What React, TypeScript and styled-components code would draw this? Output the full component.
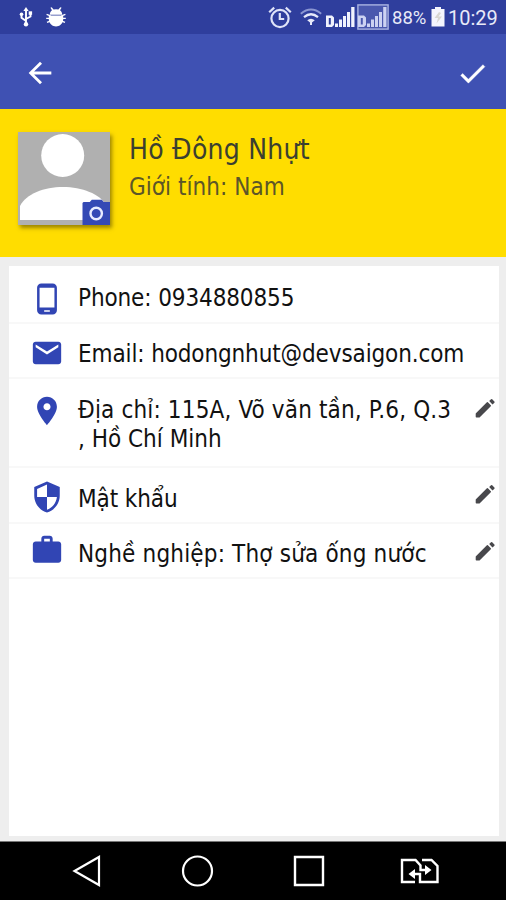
import React from 'react';
import styled, { createGlobalStyle } from 'styled-components';

const GlobalStyle = createGlobalStyle`
  html, body { margin: 0; padding: 0; }
  body { background: #eee; overflow: hidden; }
  svg { display: block; flex: none; }
`;

const Screen = styled.div`
  width: 506px;
  height: 900px;
  display: flex;
  flex-direction: column;
  background: #eeeeee;
  font-family: "DejaVu Sans Condensed", "DejaVu Sans", sans-serif;
  font-stretch: condensed;
`;

const StatusBar = styled.header`
  height: 34px;
  flex: none;
  box-sizing: border-box;
  display: flex;
  align-items: center;
  justify-content: space-between;
  padding: 0 10px 0 19px;
  background: #2f3e9d;
  color: #e8eaf8;
  font-family: Roboto, sans-serif;
  font-stretch: normal;
`;

const StatusGroup = styled.div<{ $gap: number }>`
  display: flex;
  align-items: center;
  gap: ${p => p.$gap}px;
`;

const StatusText = styled.span<{ $size: number; $width: number }>`
  font-size: ${p => p.$size}px;
  line-height: 34px;
  width: ${p => p.$width}px;
  padding-top: 1px;
  height: 34px;
  box-sizing: border-box;
  white-space: nowrap;
`;

const AppBar = styled.nav`
  height: 75px;
  flex: none;
  box-sizing: border-box;
  display: flex;
  align-items: center;
  justify-content: space-between;
  padding: 3px 17px 0 23px;
  background: #3f51b3;
`;

const IconButton = styled.button`
  padding: 0;
  border: 0;
  background: none;
  display: flex;
`;

const Profile = styled.section`
  height: 148px;
  flex: none;
  box-sizing: border-box;
  display: flex;
  padding: 23px 0 0 18px;
  background: #ffdd00;
`;

const Avatar = styled.div`
  width: 92px;
  height: 93px;
  box-shadow: 2px 3px 4px rgba(90, 75, 0, 0.6);
`;

const ProfileText = styled.div`
  margin-left: 19px;
  display: flex;
  flex-direction: column;
`;

const Name = styled.h1`
  margin: 0;
  font-size: 28px;
  line-height: 36px;
  font-weight: 400;
  color: #3b4030;
  letter-spacing: 0.25px;
  white-space: nowrap;
`;

const Gender = styled.p`
  margin: 3px 0 0;
  font-size: 24px;
  line-height: 32px;
  color: #5c5628;
  letter-spacing: 0.05px;
  white-space: nowrap;
`;

const Card = styled.main`
  flex: 1;
  margin: 9px 7px 5px 9px;
  background: #fff;
`;

const Row = styled.div<{ $height: number }>`
  height: ${p => p.$height}px;
  box-sizing: border-box;
  display: grid;
  grid-template-columns: 69px 1fr 24px;
  border-bottom: 2px solid #f8f8f8;
`;

const RowIcon = styled.div<{ $top: number }>`
  padding: ${p => p.$top}px 0 0 21px;
`;

const RowText = styled.div<{ $top: number }>`
  padding-top: ${p => p.$top}px;
  font-size: 24px;
  line-height: 29px;
  color: #111;
  white-space: nowrap;
`;

const Line = styled.div<{ $track: number }>`
  letter-spacing: ${p => p.$track}px;
`;

const EditButton = styled(IconButton)<{ $top: number }>`
  padding-top: ${p => p.$top}px;
  align-self: start;
`;

const NavBar = styled.footer`
  height: 59px;
  flex: none;
  box-sizing: border-box;
  display: grid;
  grid-template-columns: 108px 112px 108px auto;
  align-items: center;
  padding-left: 72px;
  background: #000;
  border-top: 1px solid #777;
`;

const BLUE = '#3145b4';

const ICONS = {
  phone: 'M16 1H8C6.34 1 5 2.34 5 4v16c0 1.66 1.34 3 3 3h8c1.66 0 3-1.34 3-3V4c0-1.66-1.34-3-3-3zm-2 20h-4v-1h4v1zm3.25-3H6.75V4h10.5v14z',
  mail: 'M20 4H4c-1.1 0-1.99.9-1.99 2L2 18c0 1.1.9 2 2 2h16c1.1 0 2-.9 2-2V6c0-1.1-.9-2-2-2zm0 4l-8 5-8-5V6l8 5 8-5v2z',
  place: 'M12 2C8.13 2 5 5.13 5 9c0 5.25 7 13 7 13s7-7.75 7-13c0-3.87-3.13-7-7-7zm0 9.5c-1.38 0-2.5-1.12-2.5-2.5s1.12-2.5 2.5-2.5 2.5 1.12 2.5 2.5-1.12 2.5-2.5 2.5z',
  security: 'M12 1L3 5v6c0 5.55 3.84 10.74 9 12 5.16-1.26 9-6.45 9-12V5l-9-4zm0 10.99h7c-.53 4.12-3.28 7.79-7 8.94V12H5V6.3l7-3.11v8.8z',
  work: 'M20 6h-4V4c0-1.11-.89-2-2-2h-4c-1.11 0-2 .89-2 2v2H4c-1.11 0-1.99.89-1.99 2L2 19c0 1.11.89 2 2 2h16c1.11 0 2-.89 2-2V8c0-1.11-.89-2-2-2zm-6 0h-4V4h4v2z',
};

const Glyph = ({ d }: { d: string }) => (
  <svg width="34" height="34" viewBox="0 0 24 24" fill={BLUE}><path d={d} /></svg>
);

const Pencil = () => (
  <svg width="20" height="20" viewBox="0 0 20 20" fill="#48484c">
    <path d="M1.4 18.700v-2.900L12.400 4.800l2.900 2.900L4.300 18.700z" stroke="#48484c" strokeWidth="1.400" strokeLinejoin="round" />
    <path d="M14.200 3.100l1.800-1.800q.6-.5 1.200 0l2.200 2.200q.5.6 0 1.200L17.500 6.400z" />
  </svg>
);

const UsbIcon = () => (
  <svg width="14" height="20" viewBox="0 0 14 20" fill="#fff" stroke="#fff">
    <path d="M7 17V3M7 14L2.500 10.800V7M7 12l4.500-2.500V6" fill="none" strokeWidth="1.900" />
    <path d="M7 0l2.600 4H4.400z" stroke="none" />
    <circle cx="7" cy="17.300" r="2.200" stroke="none" />
    <circle cx="2.500" cy="7.200" r="1.800" stroke="none" />
    <path d="M9.700 4.300h3.400v3.500H9.700z" stroke="none" />
  </svg>
);

const BugIcon = () => (
  <svg width="20" height="20" viewBox="0 0 20 20" fill="#fff">
    <path d="M3.800 7.800C3.800 5.500 4.800 4 6 3.200L4.400.8l1.300-.6 1.900 2.300q2.400-.5 4.800 0L14.300.2l1.300.6L14 3.200c1.200.8 2.200 2.300 2.200 4.600z" />
    <path d="M2.800 8.600h14.400v4c0 4.200-4 7-7.200 7s-7.200-2.800-7.200-7z" />
    <path d="M.6 7.400l4 1.400M19.400 7.400l-4 1.400M.2 11.400h19.600M1 15.400l4-1.600M19 15.400l-4-1.600" stroke="#fff" strokeWidth="1.400" />
  </svg>
);

const AlarmIcon = () => (
  <svg width="24" height="23" viewBox="0 0 24 23" fill="none" stroke="#dfe3f8" strokeWidth="2.200">
    <circle cx="12" cy="12.500" r="8.600" />
    <path d="M11.800 7v6h4.400M1.200 6.200l5-4.600M22.800 6.200l-5-4.600" />
  </svg>
);

const WifiIcon = () => (
  <svg width="22" height="18" viewBox="0 0 22 18" fill="none">
    <path d="M.8 5.800Q11-2.600 21.200 5.800" stroke="#8b96d2" strokeWidth="1.900" />
    <path d="M4 9.200q7-5.900 14 0" stroke="#e6e9fa" strokeWidth="2.200" />
    <path d="M7.200 12.300q3.800-3.200 7.600 0L12 14.500V17h-2v-2.500z" fill="#e6e9fa" />
  </svg>
);

const SignalIcon = ({ boxed }: { boxed?: boolean }) => (
  <svg width="32" height="26" viewBox="0 0 32 26" fill={boxed ? '#ccd2f2' : '#f0f2fd'}>
    {boxed && <rect x=".9" y=".9" width="30.200" height="24.200" fill="#4a58ae" stroke="#aab3e2" strokeWidth="1.400" />}
    <path fillRule="evenodd" d="M1 11.500h6l2 2v7.500l-2 2H1zM3.800 14v6.500h2V14z" />
    <path d="M10 19.500h3v3.500h-3zM14 15.500h3V23h-3zM18 12h3v11h-3zM22 8h3v15h-3zM26.200 3h3.300v20h-3.300z" />
  </svg>
);

const BatteryIcon = () => (
  <svg width="14" height="20" viewBox="0 0 14 20">
    <path d="M4 0h6v2h3.500v17.500H.5V2H4z" fill="#f4f5fd" />
    <path d="M8 5l-4.500 6H7l-1.500 5.500L11 9.500H7.500L10 6z" fill="#d8d7d2" />
  </svg>
);

const AvatarArt = () => (
  <svg width="93" height="93" viewBox="0 0 93 93">
    <rect width="92" height="93" fill="#b0b0b0" />
    <circle cx="44.700" cy="23.500" r="21.500" fill="#fff" />
    <path d="M2 88V74C8 62 26 55 45 55s37 7 43 18v15z" fill="#fff" />
    <path d="M65.500 70h6.300l2-2.300h10l2 2.300H92V93H64.500V71z" fill="#3449b5" />
    <circle cx="78.200" cy="81.500" r="5.700" fill="#3449b5" stroke="#e9ecff" strokeWidth="2.400" />
  </svg>
);

interface Item {
  icon: keyof typeof ICONS;
  height: number;
  iconTop: number;
  textTop: number;
  editTop?: number;
  lines: [text: string, tracking: number][];
}

const ITEMS: Item[] = [
  { icon: 'phone', height: 58, iconTop: 16, textTop: 18, lines: [['Phone: 0934880855', -0.12]] },
  { icon: 'mail', height: 55, iconTop: 12, textTop: 16, lines: [['Email: hodongnhut@devsaigon.com', -0.13]] },
  { icon: 'place', height: 89, iconTop: 15, textTop: 17, editTop: 19, lines: [['Địa chỉ: 115A, Võ văn tần, P.6, Q.3', 0.15], [', Hồ Chí Minh', 0]] },
  { icon: 'security', height: 56, iconTop: 12, textTop: 17, editTop: 16, lines: [['Mật khẩu', -0.1]] },
  { icon: 'work', height: 55, iconTop: 9, textTop: 16, editTop: 17, lines: [['Nghề nghiệp: Thợ sửa ống nước', 0.17]] },
];

export default function App() {
  return (
    <Screen>
      <GlobalStyle />
      <StatusBar>
        <StatusGroup $gap={13}><UsbIcon /><BugIcon /></StatusGroup>
        <StatusGroup $gap={3}>
          <StatusGroup $gap={8}><AlarmIcon /><WifiIcon /></StatusGroup>
          <StatusGroup $gap={0}><SignalIcon /><SignalIcon boxed /></StatusGroup>
          <StatusText $size={18.5} $width={36}>88%</StatusText>
          <BatteryIcon />
          <StatusText $size={20} $width={48}>10:29</StatusText>
        </StatusGroup>
      </StatusBar>
      <AppBar>
        <IconButton aria-label="Back">
          <svg width="34" height="34" viewBox="0 0 24 24" fill="#fff"><path d="M20 11H7.830l5.590-5.590L12 4l-8 8 8 8 1.410-1.410L7.830 13H20v-2z" /></svg>
        </IconButton>
        <IconButton aria-label="Save">
          <svg width="33" height="33" viewBox="0 0 24 24" fill="#fff" stroke="#fff" strokeWidth=".3"><path d="M9 16.170L4.830 12l-1.420 1.410L9 19 21 7l-1.410-1.410z" /></svg>
        </IconButton>
      </AppBar>
      <Profile>
        <Avatar><AvatarArt /></Avatar>
        <ProfileText>
          <Name>Hồ Đông Nhựt</Name>
          <Gender>Giới tính: Nam</Gender>
        </ProfileText>
      </Profile>
      <Card>
        {ITEMS.map(item => (
          <Row key={item.icon} $height={item.height}>
            <RowIcon $top={item.iconTop}><Glyph d={ICONS[item.icon]} /></RowIcon>
            <RowText $top={item.textTop}>
              {item.lines.map(([text, track]) => <Line key={text} $track={track}>{text}</Line>)}
            </RowText>
            {item.editTop !== undefined && <EditButton $top={item.editTop} aria-label="Edit"><Pencil /></EditButton>}
          </Row>
        ))}
      </Card>
      <NavBar>
        <svg width="30" height="34" viewBox="0 0 30 34" fill="none" stroke="#fff" strokeWidth="2.200"><path d="M27 3v28L2.500 17z" /></svg>
        <svg width="34" height="34" viewBox="0 0 34 34" fill="none" stroke="#fff" strokeWidth="2.200"><circle cx="17.500" cy="17" r="14.500" /></svg>
        <svg width="34" height="34" viewBox="0 0 34 34" fill="none" stroke="#fff" strokeWidth="2.400"><path d="M3 3h28v28H3z" /></svg>
        <svg width="40" height="26" viewBox="0 0 40 26" fill="none" stroke="#fff" strokeWidth="2.400">
          <path d="M15 24H2V2h13.500l5 5.500V12h6M22 2h9.500L37.500 8v16H20v-8h-7" />
          <path d="M25 7l6.500 5-6.500 5zM15 11L8.500 16l6.500 5z" fill="#fff" stroke="none" />
        </svg>
      </NavBar>
    </Screen>
  );
}
